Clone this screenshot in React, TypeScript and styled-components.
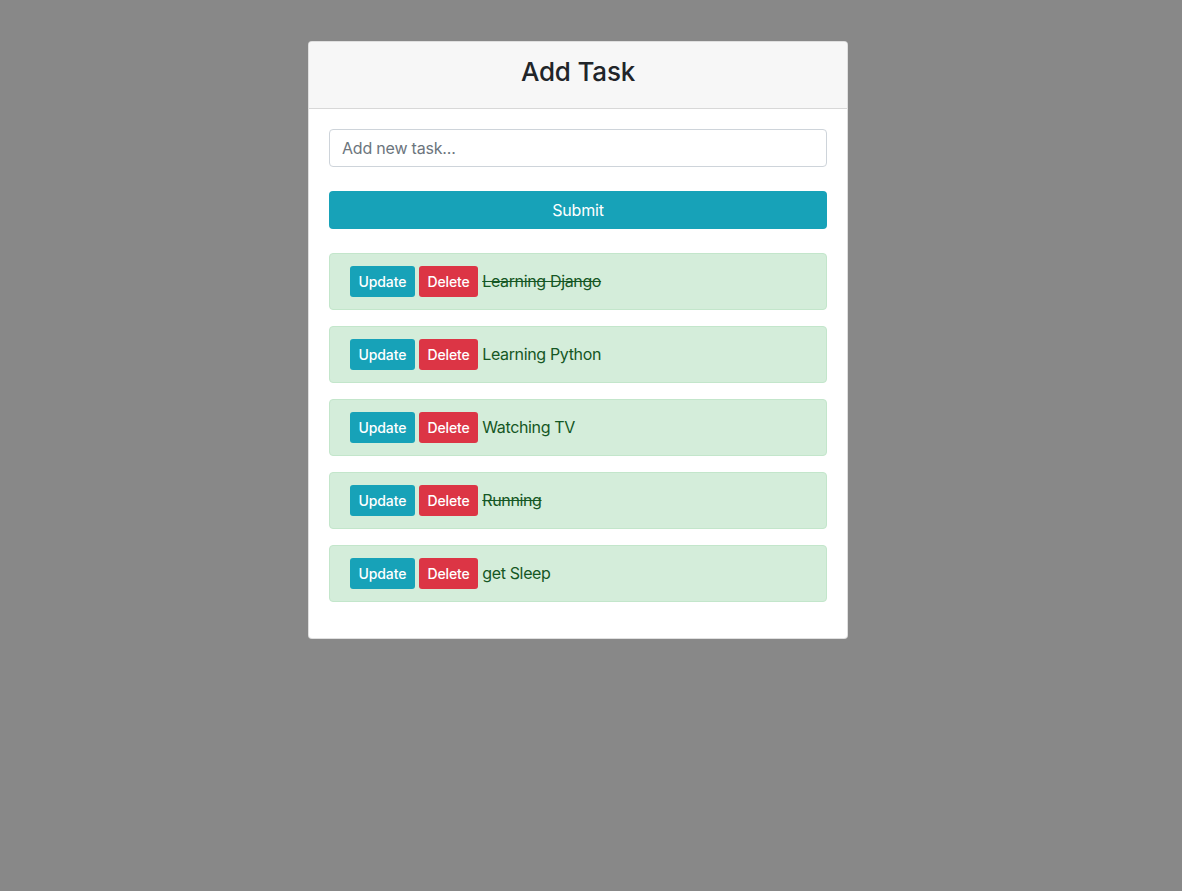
import React from "react";
import styled, { createGlobalStyle } from "styled-components";

const Global = createGlobalStyle`
  html, body { margin: 0; padding: 0; }
  body {
    background: #888888;
    font-family: Inter, "Noto Sans", "Liberation Sans", sans-serif;
    color: #212529;
    min-height: 891px;
  }
`;

const Page = styled.div`
  padding: 41px 0 0 308px;
`;

const Card = styled.div`
  width: 540px;
  box-sizing: border-box;
  background: #fff;
  border: 1px solid rgba(0, 0, 0, 0.125);
  border-radius: 4px;
`;

const Header = styled.div`
  height: 66px;
  background: #f7f7f7;
  border-bottom: 1px solid rgba(0, 0, 0, 0.125);
  border-radius: 4px 4px 0 0;
  display: flex;
  align-items: center;
  justify-content: center;
`;

const Title = styled.h3`
  margin: 0 0 8px;
  font-size: 26px;
  font-weight: 500;
  letter-spacing: -0.2px;
  color: #212529;
`;

const Body = styled.div`
  padding: 20px 20px 36px;
  display: flex;
  flex-direction: column;
`;

const Input = styled.input`
  box-sizing: border-box;
  height: 38px;
  width: 100%;
  padding: 6px 12px;
  font-family: inherit;
  font-size: 16px;
  letter-spacing: -0.2px;
  color: #495057;
  border: 1px solid #ced4da;
  border-radius: 4px;
  outline: none;
  &::placeholder { color: #6c757d; }
`;

const SubmitButton = styled.button`
  margin-top: 24px;
  height: 38px;
  width: 100%;
  border: none;
  border-radius: 4px;
  background: #17a2b8;
  color: #fff;
  font-family: inherit;
  font-size: 16px;
  font-weight: 400;
  letter-spacing: -0.2px;
`;

const List = styled.div`
  margin-top: 24px;
  display: flex;
  flex-direction: column;
  gap: 16px;
`;

const Row = styled.div`
  box-sizing: border-box;
  height: 57px;
  padding: 0 20px;
  background: #d4edda;
  border: 1px solid #c3e6cb;
  border-radius: 4px;
  display: flex;
  align-items: center;
  gap: 4px;
  color: #155724;
`;

const SmallButton = styled.button<{ $variant: "info" | "danger" }>`
  height: 31px;
  padding: 0 8.5px;
  border: none;
  border-radius: 3px;
  background: ${(p) => (p.$variant === "info" ? "#17a2b8" : "#dc3545")};
  color: #fff;
  font-family: inherit;
  font-size: 14px;
  font-weight: 500;
  letter-spacing: -0.1px;
`;

const TaskText = styled.span<{ $done: boolean }>`
  font-size: 16px;
  letter-spacing: -0.35px;
  margin-top: -2px;
  text-decoration: ${(p) => (p.$done ? "line-through" : "none")};
`;

const tasks = [
  { title: "Learning Django", done: true },
  { title: "Learning Python", done: false },
  { title: "Watching TV", done: false },
  { title: "Running", done: true },
  { title: "get Sleep", done: false },
];

export default function App() {
  return (
    <>
      <Global />
      <Page>
        <Card>
          <Header>
            <Title>Add Task</Title>
          </Header>
          <Body>
            <Input placeholder="Add new task..." />
            <SubmitButton>Submit</SubmitButton>
            <List>
              {tasks.map((t) => (
                <Row key={t.title}>
                  <SmallButton $variant="info">Update</SmallButton>
                  <SmallButton $variant="danger">Delete</SmallButton>
                  <TaskText $done={t.done}>{t.title}</TaskText>
                </Row>
              ))}
            </List>
          </Body>
        </Card>
      </Page>
    </>
  );
}
